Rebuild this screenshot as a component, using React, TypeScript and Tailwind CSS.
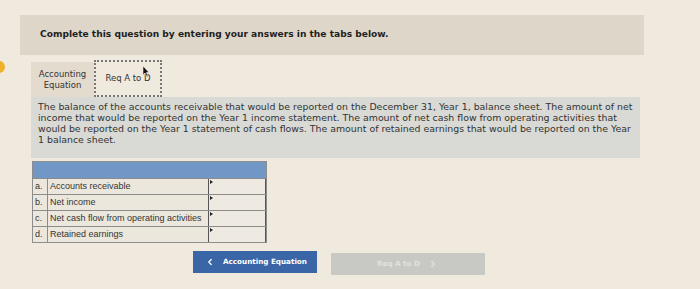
import { ChevronLeft, ChevronRight } from "lucide-react";

const rows = [
  { key: "a.", label: "Accounts receivable" },
  { key: "b.", label: "Net income" },
  { key: "c.", label: "Net cash flow from operating activities" },
  { key: "d.", label: "Retained earnings" },
];

const uiFont = { fontFamily: "'DejaVu Sans', Verdana, sans-serif" };

function Cursor() {
  return (
    <svg width="8" height="13" viewBox="0 0 8 13" className="absolute left-[142px] top-[65px]">
      <path d="M1 1 L1 10 L3 8 L5 12 L6 11.5 L4.5 7.5 L7 7.5 Z" fill="#111" stroke="#f4f0e8" strokeWidth="0.6" />
    </svg>
  );
}

export default function App() {
  return (
    <div
      className="relative h-[289px] w-[700px] overflow-hidden bg-[#efe9de] pl-[20px] pt-[15px] text-[#2b2b2b]"
      style={uiFont}
    >
      <span className="absolute -left-[7px] top-[61px] h-[12px] w-[12px] rounded-full bg-[#f0b12a]" />
      <Cursor />

      <div className="flex h-[40px] w-[624px] items-center bg-[#ddd6c9] pl-[20px]">
        <p className="text-[9.1px] font-bold text-[#1f1f1f]">
          Complete this question by entering your answers in the tabs below.
        </p>
      </div>

      <div className="ml-[11px] w-[609px]">
        <div className="mt-[5px] flex h-[37px] items-end">
          <div className="flex h-[35px] w-[63px] items-center justify-center bg-[#e2dbce] text-center text-[8.5px] leading-[11px] text-[#333]">
            Accounting
            <br />
            Equation
          </div>
          <div className="flex h-[37px] w-[68px] items-center justify-center border-2 border-dotted border-[#777] bg-[#efe9de] text-[8.5px] text-[#333]">
            Req A to D
          </div>
        </div>

        <div className="h-[61px] whitespace-nowrap bg-[#d9dad6] px-[7px] pt-[4px] text-[9.4px] leading-[11px] text-[#333]">
          The balance of the accounts receivable that would be reported on the December 31, Year 1, balance sheet. The amount of net
          <br />
          income that would be reported on the Year 1 income statement. The amount of net cash flow from operating activities that
          <br />
          would be reported on the Year 1 statement of cash flows. The amount of retained earnings that would be reported on the Year
          <br />1 balance sheet.
        </div>

        <div
          className="ml-[1px] mt-[3px] w-[235px] border border-[#8c8c8c] bg-[#ece7dd]"
          style={{ fontFamily: "'Liberation Sans', Arial, sans-serif" }}
        >
          <div className="h-[16px] bg-[#7097c6]" />
          {rows.map((row) => (
            <div key={row.key} className="flex h-[16px] border-t border-[#8c8c8c] text-[9px] text-[#333]">
              <span className="flex w-[15px] items-center border-r border-[#8c8c8c] pl-[2px]">{row.key}</span>
              <span className="flex w-[160px] items-center whitespace-nowrap pl-[2px]">{row.label}</span>
              <span className="relative flex-1 border-x border-[#555] bg-[#efeae1]">
                <span className="absolute left-[1px] top-[1px] h-0 w-0 border-y-[2px] border-l-[3px] border-y-transparent border-l-[#222]" />
              </span>
            </div>
          ))}
        </div>

        <div className="ml-[162px] mt-[8px] flex items-start gap-[14px] text-[7.2px] font-bold">
          <button
            type="button"
            className="flex h-[22px] w-[124px] items-center gap-[8px] bg-[#3a65a6] pl-[12px] text-white"
          >
            <ChevronLeft className="h-[10px] w-[10px]" strokeWidth={3} />
            Accounting Equation
          </button>
          <button
            type="button"
            className="mt-[2px] flex h-[22px] w-[154px] items-center gap-[8px] bg-[#c8c8c4] pl-[46px] text-[#e2e2de]"
          >
            Req A to D
            <ChevronRight className="h-[10px] w-[10px]" strokeWidth={3} />
          </button>
        </div>
      </div>
    </div>
  );
}
